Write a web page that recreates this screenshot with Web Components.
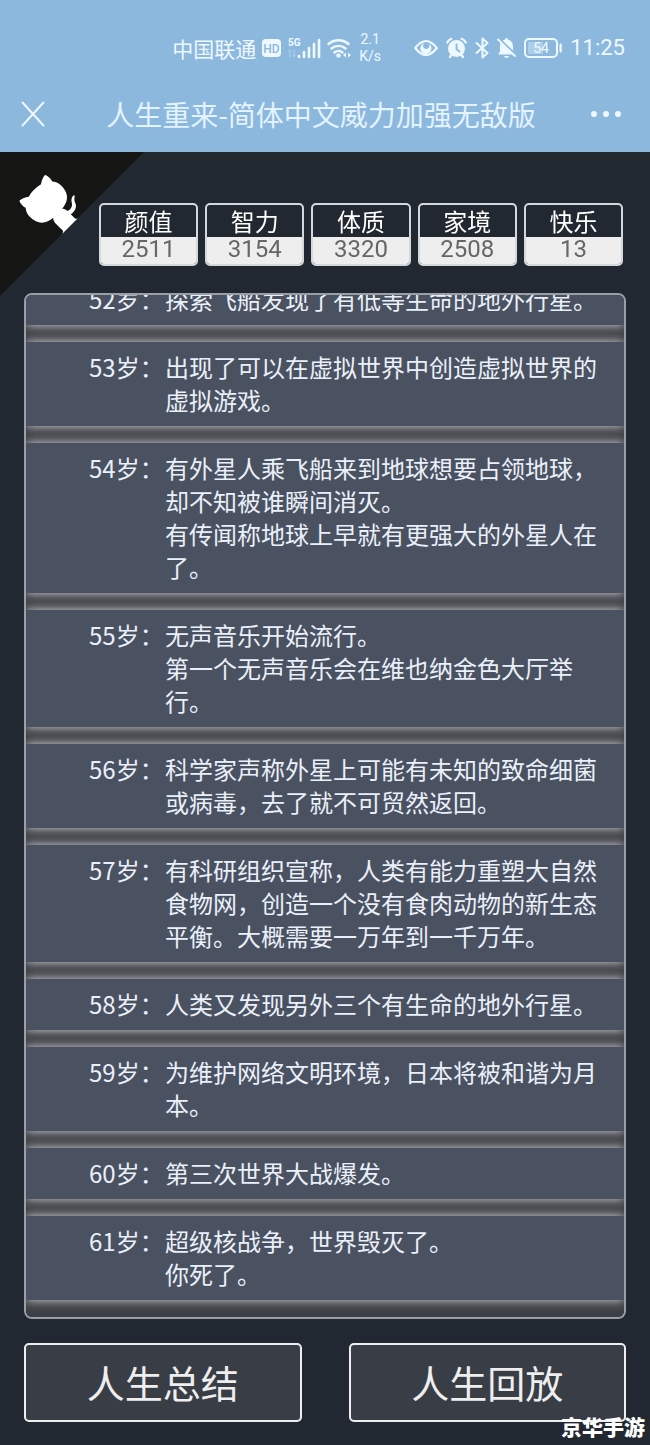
<!DOCTYPE html>
<html lang="zh-CN">
<head>
<meta charset="UTF-8">
<meta name="viewport" content="width=device-width, initial-scale=1">
<title>人生重来</title>
<style>
  html, body { margin: 0; height: 100%; }
  body {
    background: #222831;
    color: #eeeeee;
    font-family: "Noto Sans CJK SC", "Noto Sans", sans-serif;
  }
</style>
</head>
<body>
<life-app>
  <status-bar slot="top" carrier="中国联通" speed="2.1" battery="54" time="11:25"></status-bar>
  <title-bar slot="top">人生重来-简体中文威力加强无敌版</title-bar>

  <github-corner slot="corner" href="#github"></github-corner>

  <stat-box slot="stats" label="颜值" value="2511"></stat-box>
  <stat-box slot="stats" label="智力" value="3154"></stat-box>
  <stat-box slot="stats" label="体质" value="3320"></stat-box>
  <stat-box slot="stats" label="家境" value="2508"></stat-box>
  <stat-box slot="stats" label="快乐" value="13"></stat-box>

  <life-log>
    <life-entry age="52">探索飞船发现了有低等生命的地外行星。</life-entry>
    <life-entry age="53">出现了可以在虚拟世界中创造虚拟世界的虚拟游戏。</life-entry>
    <life-entry age="54">有外星人乘飞船来到地球想要占领地球，却不知被谁瞬间消灭。<br>有传闻称地球上早就有更强大的外星人在了。</life-entry>
    <life-entry age="55">无声音乐开始流行。<br>第一个无声音乐会在维也纳金色大厅举行。</life-entry>
    <life-entry age="56">科学家声称外星上可能有未知的致命细菌或病毒，去了就不可贸然返回。</life-entry>
    <life-entry age="57">有科研组织宣称，人类有能力重塑大自然食物网，创造一个没有食肉动物的新生态平衡。大概需要一万年到一千万年。</life-entry>
    <life-entry age="58">人类又发现另外三个有生命的地外行星。</life-entry>
    <life-entry age="59">为维护网络文明环境，日本将被和谐为月本。</life-entry>
    <life-entry age="60">第三次世界大战爆发。</life-entry>
    <life-entry age="61">超级核战争，世界毁灭了。<br>你死了。</life-entry>
  </life-log>

  <life-button slot="actions">人生总结</life-button>
  <life-button slot="actions">人生回放</life-button>
  <site-mark slot="mark">京华手游</site-mark>
</life-app>

<script>
class LifeApp extends HTMLElement {
  connectedCallback() {
    this.attachShadow({ mode: "open" }).innerHTML = `
      <style>
        :host { display: flex; flex-direction: column; height: 100vh; position: relative; overflow: hidden; }
        header { background: #8cb8de; color: #eef8ff; }
        main { position: relative; flex: 1; min-height: 0; display: flex; flex-direction: column; gap: 24px; padding: 51px 24px 23px; box-sizing: border-box; }
        .stats { display: grid; grid-template-columns: repeat(5, 1fr); gap: 7px; padding: 0 3px 3px 75px; }
        .actions { display: grid; grid-template-columns: 1fr 1fr; gap: 47px; }
      </style>
      <header><slot name="top"></slot></header>
      <main>
        <slot name="corner"></slot>
        <div class="stats"><slot name="stats"></slot></div>
        <slot></slot>
        <div class="actions"><slot name="actions"></slot></div>
      </main>
      <slot name="mark"></slot>
    `;
  }
}

class StatusBar extends HTMLElement {
  connectedCallback() {
    const carrier = this.getAttribute("carrier") || "";
    const speed = this.getAttribute("speed") || "0";
    const battery = this.getAttribute("battery") || "100";
    const time = this.getAttribute("time") || "00:00";

    this.attachShadow({ mode: "open" }).innerHTML = `
      <style>
        :host { display: flex; justify-content: flex-end; align-items: center; gap: 32px; height: 60px; padding: 18px 25px 0 0; }
        .group { display: flex; align-items: center; gap: 8px; }
        .net { gap: 6px; }
        .carrier { font-size: 21px; line-height: 32px; }
        .speed { font: 14px/17px Roboto, sans-serif; text-align: center; width: 24px; }
        .time { font: 22px/32px Roboto, sans-serif; }
        svg { display: block; fill: currentColor; }
        svg text { font-family: Roboto, sans-serif; }
        .line { fill: none; stroke: currentColor; }
      </style>
      <div class="group net">
        <span class="carrier">${carrier}</span>
        <svg width="20" height="20" viewBox="0 0 20 20">
          <rect y="1" width="19" height="18" rx="4"/>
          <text x="9.5" y="14.5" font-size="12" font-weight="500" text-anchor="middle" fill="#8cb8de">HD</text>
        </svg>
        <svg width="33" height="24" viewBox="0 0 33 24">
          <text x="0" y="10" font-size="10" font-weight="700">5G</text>
          <path d="M2 21v-7l-1.500 2M6 14v7l1.500-2" class="line" opacity=".4"/>
          <path d="M11 21v-1M16 21v-5M21 21v-9M26 21v-13M31 21V4" class="line" stroke-width="2.600" stroke-linecap="round"/>
        </svg>
        <svg width="25" height="24" viewBox="0 0 25 24">
          <path d="M1.500 8a15 15 0 0 1 20 0M4.500 12.500a10.500 10.500 0 0 1 14 0M7.500 16.500a6 6 0 0 1 8 0" class="line" stroke-width="2.400" stroke-linecap="round"/>
          <circle cx="11.500" cy="19.500" r="2.200"/>
          <path d="M19 16.500v5l-3-2.500zM21 16.500v5l3-2.500z"/>
        </svg>
        <span class="speed">${speed}<br>K/s</span>
      </div>
      <div class="group">
        <svg width="24" height="18" viewBox="0 0 24 18">
          <path d="M1.200 9Q12-5 22.800 9Q12 23 1.200 9z" class="line" stroke-width="2.200"/>
          <path d="M11 3.800a5.600 5.600 0 1 0 6.500 5.200a5.500 5.500 0 0 0-3-4.500a3.200 3.200 0 1 1-3.500-.7z"/>
        </svg>
        <svg width="21" height="22" viewBox="0 0 21 22">
          <circle cx="10.500" cy="11.500" r="8.500"/>
          <path d="M1.300 5.500Q2.500 3 5.300 1.800M19.700 5.500Q18.500 3 15.700 1.800M4 20l1.500-2M17 20l-1.500-2" class="line" stroke-width="2.200" stroke-linecap="round"/>
          <path d="M10.500 6.500v5.500l3.500 3" fill="none" stroke="#8cb8de" stroke-width="1.800"/>
        </svg>
        <svg width="14" height="22" viewBox="0 0 14 22">
          <path d="M1.500 6l11 10L7.500 20.500V1.500L12.500 6l-11 10" class="line" stroke-width="2" stroke-linejoin="round" stroke-linecap="round"/>
        </svg>
        <svg width="19" height="22" viewBox="0 0 19 22">
          <path d="M9.500 1q1.500 0 1.500 1.500q5 1.500 5 7v5l2 3H1l2-3v-5q0-5.500 5-7Q8 1 9.500 1zM7 19h5q-.5 2-2.500 2T7 19z"/>
          <path d="M2 1.500L19 18" stroke="#8cb8de" stroke-width="2"/>
          <path d="M1 2.500L18 19" stroke="currentColor" stroke-width="1.800" stroke-linecap="round"/>
        </svg>
        <svg width="38" height="20" viewBox="0 0 38 20">
          <rect x="1" y="1" width="32" height="18" rx="4" class="line" stroke-width="2"/>
          <rect x="4" y="4" width="15" height="12" rx="1" opacity=".35"/>
          <rect x="35.500" y="5.500" width="2.200" height="9" rx="1"/>
          <text x="17" y="15" font-size="14" text-anchor="middle">${battery}</text>
        </svg>
        <span class="time">${time}</span>
      </div>
    `;
  }
}

class TitleBar extends HTMLElement {
  connectedCallback() {
    this.attachShadow({ mode: "open" }).innerHTML = `
      <style>
        :host { display: grid; grid-template-columns: 32px 1fr 32px; align-items: center; height: 72px; padding: 0 28px 2px 20px; }
        button { all: unset; display: flex; cursor: pointer; }
        h1 { margin: 0; font-size: 28px; line-height: 40px; font-weight: 400; text-align: center; color: #e3f3ff; white-space: nowrap; }
        svg { display: block; }
      </style>
      <button type="button" aria-label="关闭">
        <svg width="26" height="26" viewBox="0 0 26 26" fill="none" stroke="currentColor" stroke-width="2" stroke-linecap="round"><path d="M2.500 1.500l21 23M23.500 1.500l-21 23"/></svg>
      </button>
      <h1><slot></slot></h1>
      <button type="button" aria-label="更多">
        <svg width="32" height="8" viewBox="0 0 32 8" fill="currentColor"><circle cx="4" cy="4" r="3"/><circle cx="16" cy="4" r="3"/><circle cx="28" cy="4" r="3"/></svg>
      </button>
    `;
  }
}

class GithubCorner extends HTMLElement {
  connectedCallback() {
    this.attachShadow({ mode: "open" }).innerHTML = `
      <style>
        :host { position: absolute; top: 0; left: 0; }
        svg { display: block; width: 144px; height: 144px; fill: #151513; color: #fff; transform: scale(-1, 1); }
      </style>
      <a href="${this.getAttribute("href")}" aria-label="GitHub">
        <svg viewBox="0 0 250 250" aria-hidden="true">
          <path d="M0,0 L115,115 L130,115 L142,142 L250,250 L250,0 Z"/>
          <path fill="currentColor" d="M128.3,109.0 C113.8,99.7 119.0,89.6 119.0,89.6 C122.0,82.7 120.5,78.6 120.5,78.6 C119.2,72.0 123.4,76.3 123.4,76.3 C127.3,80.9 125.5,87.3 125.5,87.3 C122.9,97.6 130.6,101.9 134.4,103.2"/>
          <path fill="currentColor" d="M115.0,115.0 C114.9,115.1 118.7,116.5 119.8,115.4 L133.7,101.6 C136.9,99.2 139.9,98.4 142.2,98.6 C133.8,88.0 127.5,74.4 143.8,58.0 C148.5,53.4 154.0,51.2 159.7,51.0 C160.3,49.4 163.2,43.6 171.4,40.1 C171.4,40.1 176.1,42.5 178.8,56.2 C183.1,58.6 187.2,61.8 190.9,65.4 C194.5,69.0 197.7,73.2 200.1,77.6 C213.8,80.2 216.3,84.9 216.3,84.9 C212.7,93.1 206.9,96.0 205.4,96.6 C205.1,102.4 203.0,107.8 198.3,112.5 C181.9,128.9 168.3,122.5 157.7,114.1 C157.9,116.9 156.7,120.9 152.7,124.9 L141.0,136.5 C139.8,137.7 141.6,141.9 141.8,141.8 Z"/>
        </svg>
      </a>
    `;
  }
}

class StatBox extends HTMLElement {
  connectedCallback() {
    this.attachShadow({ mode: "open" }).innerHTML = `
      <style>
        :host { display: block; position: relative; border: 2px solid #d3d8da; border-radius: 5px; overflow: hidden; text-align: center; font-size: 24px; background: #222831; }
        .label { color: #fff; line-height: 32px; }
        .value { color: #666; background: #eee; font-family: Roboto, sans-serif; line-height: 25px; padding-bottom: 2px; }
      </style>
      <div class="label">${this.getAttribute("label")}</div>
      <div class="value">${this.getAttribute("value")}</div>
    `;
  }
}

class LifeLog extends HTMLElement {
  connectedCallback() {
    this.attachShadow({ mode: "open" }).innerHTML = `
      <style>
        :host { display: block; flex: 1; min-height: 0; box-sizing: border-box; border: 2px solid #9a9fa6; border-radius: 8px; background: #3d3f46; overflow-y: auto; scrollbar-width: none; }
        .list { display: flex; flex-direction: column; gap: 17px; padding-bottom: 17px; }
      </style>
      <div class="list" role="list"><slot></slot></div>
    `;
  }

  // keep the latest year in view
  scrollToEnd() {
    this.scrollTop = this.scrollHeight;
  }
}

class LifeEntry extends HTMLElement {
  connectedCallback() {
    this.setAttribute("role", "listitem");
    this.attachShadow({ mode: "open" }).innerHTML = `
      <style>
        :host { display: flex; padding: 8px 26px 10px 63px; background: #4a5261; color: #eaf0fa; font-size: 24px; line-height: 33px; box-shadow: 0 0 10px #dcdce0; }
        .age { flex: none; width: 76px; white-space: nowrap; }
        .text { flex: 1; }
      </style>
      <span class="age">${this.getAttribute("age")}岁：</span>
      <span class="text"><slot></slot></span>
    `;
  }
}

class LifeButton extends HTMLElement {
  connectedCallback() {
    this.attachShadow({ mode: "open" }).innerHTML = `
      <style>
        :host { display: block; }
        button { display: block; width: 100%; height: 79px; padding: 0 0 2px; border: 2px solid #eee; border-radius: 5px; background: #393e46; color: #eee; font-family: inherit; font-size: 38px; line-height: 56px; cursor: pointer; }
        button:hover { background: #4a5261; }
      </style>
      <button type="button"><slot></slot></button>
    `;
  }
}

class SiteMark extends HTMLElement {
  connectedCallback() {
    this.attachShadow({ mode: "open" }).innerHTML = `
      <style>
        :host { position: absolute; right: 5px; bottom: 4px; color: #fff; font-size: 21px; line-height: 30px; font-weight: 900; }
      </style>
      <slot></slot>
    `;
  }
}

customElements.define("life-app", LifeApp);
customElements.define("status-bar", StatusBar);
customElements.define("title-bar", TitleBar);
customElements.define("github-corner", GithubCorner);
customElements.define("stat-box", StatBox);
customElements.define("life-log", LifeLog);
customElements.define("life-entry", LifeEntry);
customElements.define("life-button", LifeButton);
customElements.define("site-mark", SiteMark);

document.querySelector("life-log").scrollToEnd();
</script>
</body>
</html>
